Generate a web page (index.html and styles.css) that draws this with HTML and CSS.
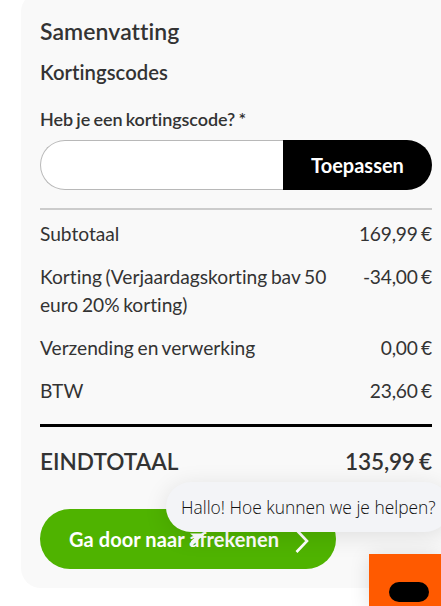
FILE: index.html
```
<!DOCTYPE html>
<html lang="nl">
<head>
<meta charset="utf-8">
<title>Samenvatting</title>
<link rel="stylesheet" href="styles.css">
</head>
<body>
<main class="summary">
  <h1 class="title">Samenvatting</h1>
  <h2 class="subtitle">Kortingscodes</h2>
  <form class="coupon">
    <label class="coupon-label" for="code">Heb je een kortingscode? *</label>
    <div class="coupon-row">
      <input class="coupon-input" id="code" type="text">
      <button class="coupon-button" type="button">Toepassen</button>
    </div>
  </form>
  <dl class="totals">
    <div class="row"><dt>Subtotaal</dt><dd>169,99 €</dd></div>
    <div class="row"><dt>Korting (Verjaardagskorting bav 50 euro 20% korting)</dt><dd>-34,00 €</dd></div>
    <div class="row"><dt>Verzending en verwerking</dt><dd>0,00 €</dd></div>
    <div class="row"><dt>BTW</dt><dd>23,60 €</dd></div>
  </dl>
  <div class="grand"><span>EINDTOTAAL</span><span class="grand-amount">135,99 €</span></div>
  <button class="checkout" type="button"><span class="checkout-text">Ga door naar afrekenen</span>
    <svg class="chevron" width="14" height="26" viewBox="0 0 14 26"><path d="M1.5 2 12 13 1.5 24" fill="none" stroke="#fff" stroke-width="2.6"/></svg>
  </button>
</main>
<aside class="bubble"><span>Hallo! Hoe kunnen we je helpen?</span>
  <svg class="tail" width="17" height="17" viewBox="0 0 17 17"><path d="M1 2.5H16L7 11 2 16V10L6 6.5Z" fill="#f3f4f7"/></svg>
</aside>
<div class="launcher"><span class="pill"></span></div>
</body>
</html>
```

FILE: styles.css
```
* { box-sizing: border-box; }
html, body { height: 606px; overflow: hidden; }
body { position: relative; margin: 0; background: #fff; color: #333; font-family: Lato, "Liberation Sans", sans-serif; font-variant-ligatures: none; }
h1, h2, dl, dd { margin: 0; }
button { border: 0; padding: 0; font: inherit; color: #fff; }
.summary { margin: -8px 0 0 21px; width: 440px; height: 596px; padding: 25px 0 0 19px; border-radius: 20px; background: #f9f9f9; }
.title, .subtitle, .coupon, .totals, .grand { width: 392px; }
.title { font-size: 23px; line-height: 28px; font-weight: 600; letter-spacing: .08px; }
.subtitle { margin-top: 14px; font-size: 20.3px; line-height: 26px; font-weight: 600; letter-spacing: .04px; }
.coupon { margin-top: 22px; }
.coupon-label { display: block; font-size: 18px; line-height: 24px; font-weight: 600; letter-spacing: -.08px; word-spacing: -1.1px; }
.coupon-row { display: flex; height: 50px; margin-top: 9px; }
.coupon-input { width: 243px; border: 1px solid #b8b8b8; border-right: 0; border-radius: 25px 0 0 25px; background: #fff; }
.coupon-button { flex: 1; border-radius: 0 25px 25px 0; background: #000; font-size: 20px; font-weight: 700; }
.totals { margin-top: 18px; padding-top: 10px; border-top: 2px solid #ccc; height: 216px; font-size: 19.2px; line-height: 28px; letter-spacing: -.02px; word-spacing: -1.2px; }
.row { display: flex; justify-content: space-between; margin-bottom: 15px; }
.row dt { width: 300px; }
.row dd { white-space: nowrap; letter-spacing: -.22px; }
.grand { display: flex; justify-content: space-between; height: 85px; padding-top: 19px; border-top: 3px solid #000; font-size: 22.6px; line-height: 32px; font-weight: 600; word-spacing: -1.2px; }
.grand-amount { letter-spacing: -.17px; }
.checkout { display: flex; align-items: center; width: 296px; height: 60px; padding-left: 29px; border-radius: 30px; background: #4fb300; font-size: 20px; font-weight: 700; letter-spacing: .08px; white-space: nowrap; }
.checkout-text { width: 211px; text-align: left; }
.chevron { margin: 4px 0 0 15px; }
.bubble { position: absolute; left: 166px; top: 482px; width: 284px; height: 50px; padding-left: 15px; border-radius: 25px; background: #f3f4f7; box-shadow: 0 4px 24px rgba(0,0,0,.11); color: #111; font: 350 17.4px/50px "Open Sans", "Noto Sans", sans-serif; white-space: nowrap; }
.tail { position: absolute; left: 23px; top: 49px; }
.launcher { position: absolute; left: 369px; top: 554px; width: 72px; height: 52px; padding: 28px 0 0 20px; background: #ff5a00; box-shadow: 0 3px 20px rgba(0,0,0,.13); }
.pill { display: block; width: 40px; height: 20px; border-radius: 10px; background: #000; }
```
